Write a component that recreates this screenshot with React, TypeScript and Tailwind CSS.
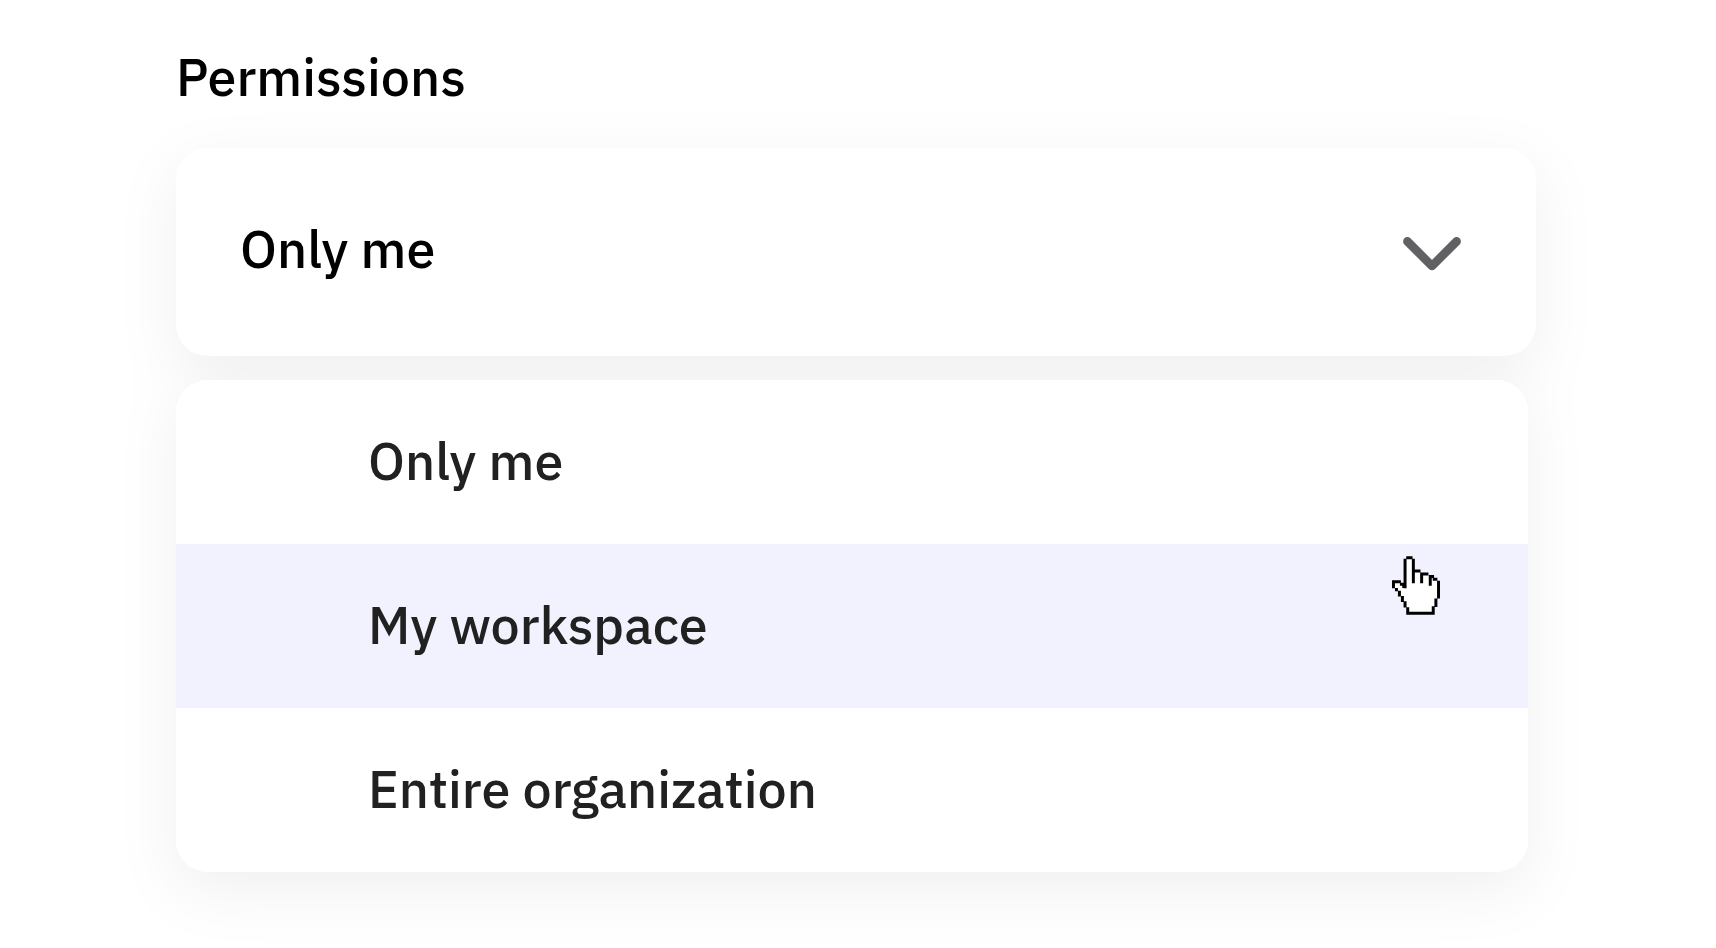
import { useState } from "react";

const options = ["Only me", "My workspace", "Entire organization"];

function Chevron() {
  return (
    <svg
      viewBox="0 0 58 34"
      className="mb-2.5 h-[34px] w-[58px] shrink-0"
      fill="none"
      stroke="#616163"
      strokeWidth="8.6"
      strokeLinecap="round"
      strokeLinejoin="round"
      aria-hidden="true"
    >
      <path d="M4.4 4.4 29 29 53.6 4.4" />
    </svg>
  );
}

function HandCursor() {
  return (
    <svg
      viewBox="35 33 144 178"
      className="pointer-events-none absolute top-3 right-[88px] h-[59px] w-12"
      fill="none"
      stroke="#000"
      strokeWidth="9"
      strokeLinecap="square"
      aria-hidden="true"
    >
      <path
        fill="#fff"
        d="M82 37H94V42H99V78H118V86H142V94H158V103H168V110H175V159H167V184H159V207H82V188H74V170H66V154H57V138H48V130H39V111H58V118H66V125H74V42H82Z"
        stroke="none"
      />
      <path d="M82 38H92M74 46V126M99 46V111M103 78H116M124 87V111M128 87H140M150 95V118M154 95H157M162 103H167M175 112V157M167 166V182M159 189V206H82V192M74 184V174M66 167V158M57 151V142M48 135V134M39 126V111H57M63 118H65M70 125H71" />
    </svg>
  );
}

export default function App() {
  const [selected, setSelected] = useState("Only me");
  const [active, setActive] = useState("My workspace");

  return (
    <main className="min-h-screen bg-white pt-[45px] pr-[180px] pb-[76px] pl-44 font-['IBM_Plex_Sans',Roboto,sans-serif] text-[52px] leading-[64px] font-medium text-black">
      <h1 id="permissions-label">Permissions</h1>

      <div className="mt-[39px] flex flex-col gap-6 drop-shadow-[0_18px_30px_rgba(0,0,0,0.06)]">
        <button
          type="button"
          aria-haspopup="listbox"
          aria-expanded="true"
          aria-labelledby="permissions-label permissions-value"
          className="flex items-end justify-between rounded-[32px] bg-white pt-[69px] pr-[75px] pb-[75px] pl-16 text-left"
        >
          <span id="permissions-value">{selected}</span>
          <Chevron />
        </button>

        <div
          role="listbox"
          aria-labelledby="permissions-label"
          className="mr-2 overflow-hidden rounded-[32px] bg-white text-[#212121]"
        >
          {options.map((option) => (
            <button
              key={option}
              type="button"
              role="option"
              aria-selected={option === selected}
              onClick={() => setSelected(option)}
              onMouseEnter={() => setActive(option)}
              className={`relative block w-full pt-[49px] pr-16 pb-[51px] pl-48 text-left ${
                option === active ? "bg-[#f2f1fe]" : "bg-white"
              }`}
            >
              {option}
              {option === active && <HandCursor />}
            </button>
          ))}
        </div>
      </div>
    </main>
  );
}
